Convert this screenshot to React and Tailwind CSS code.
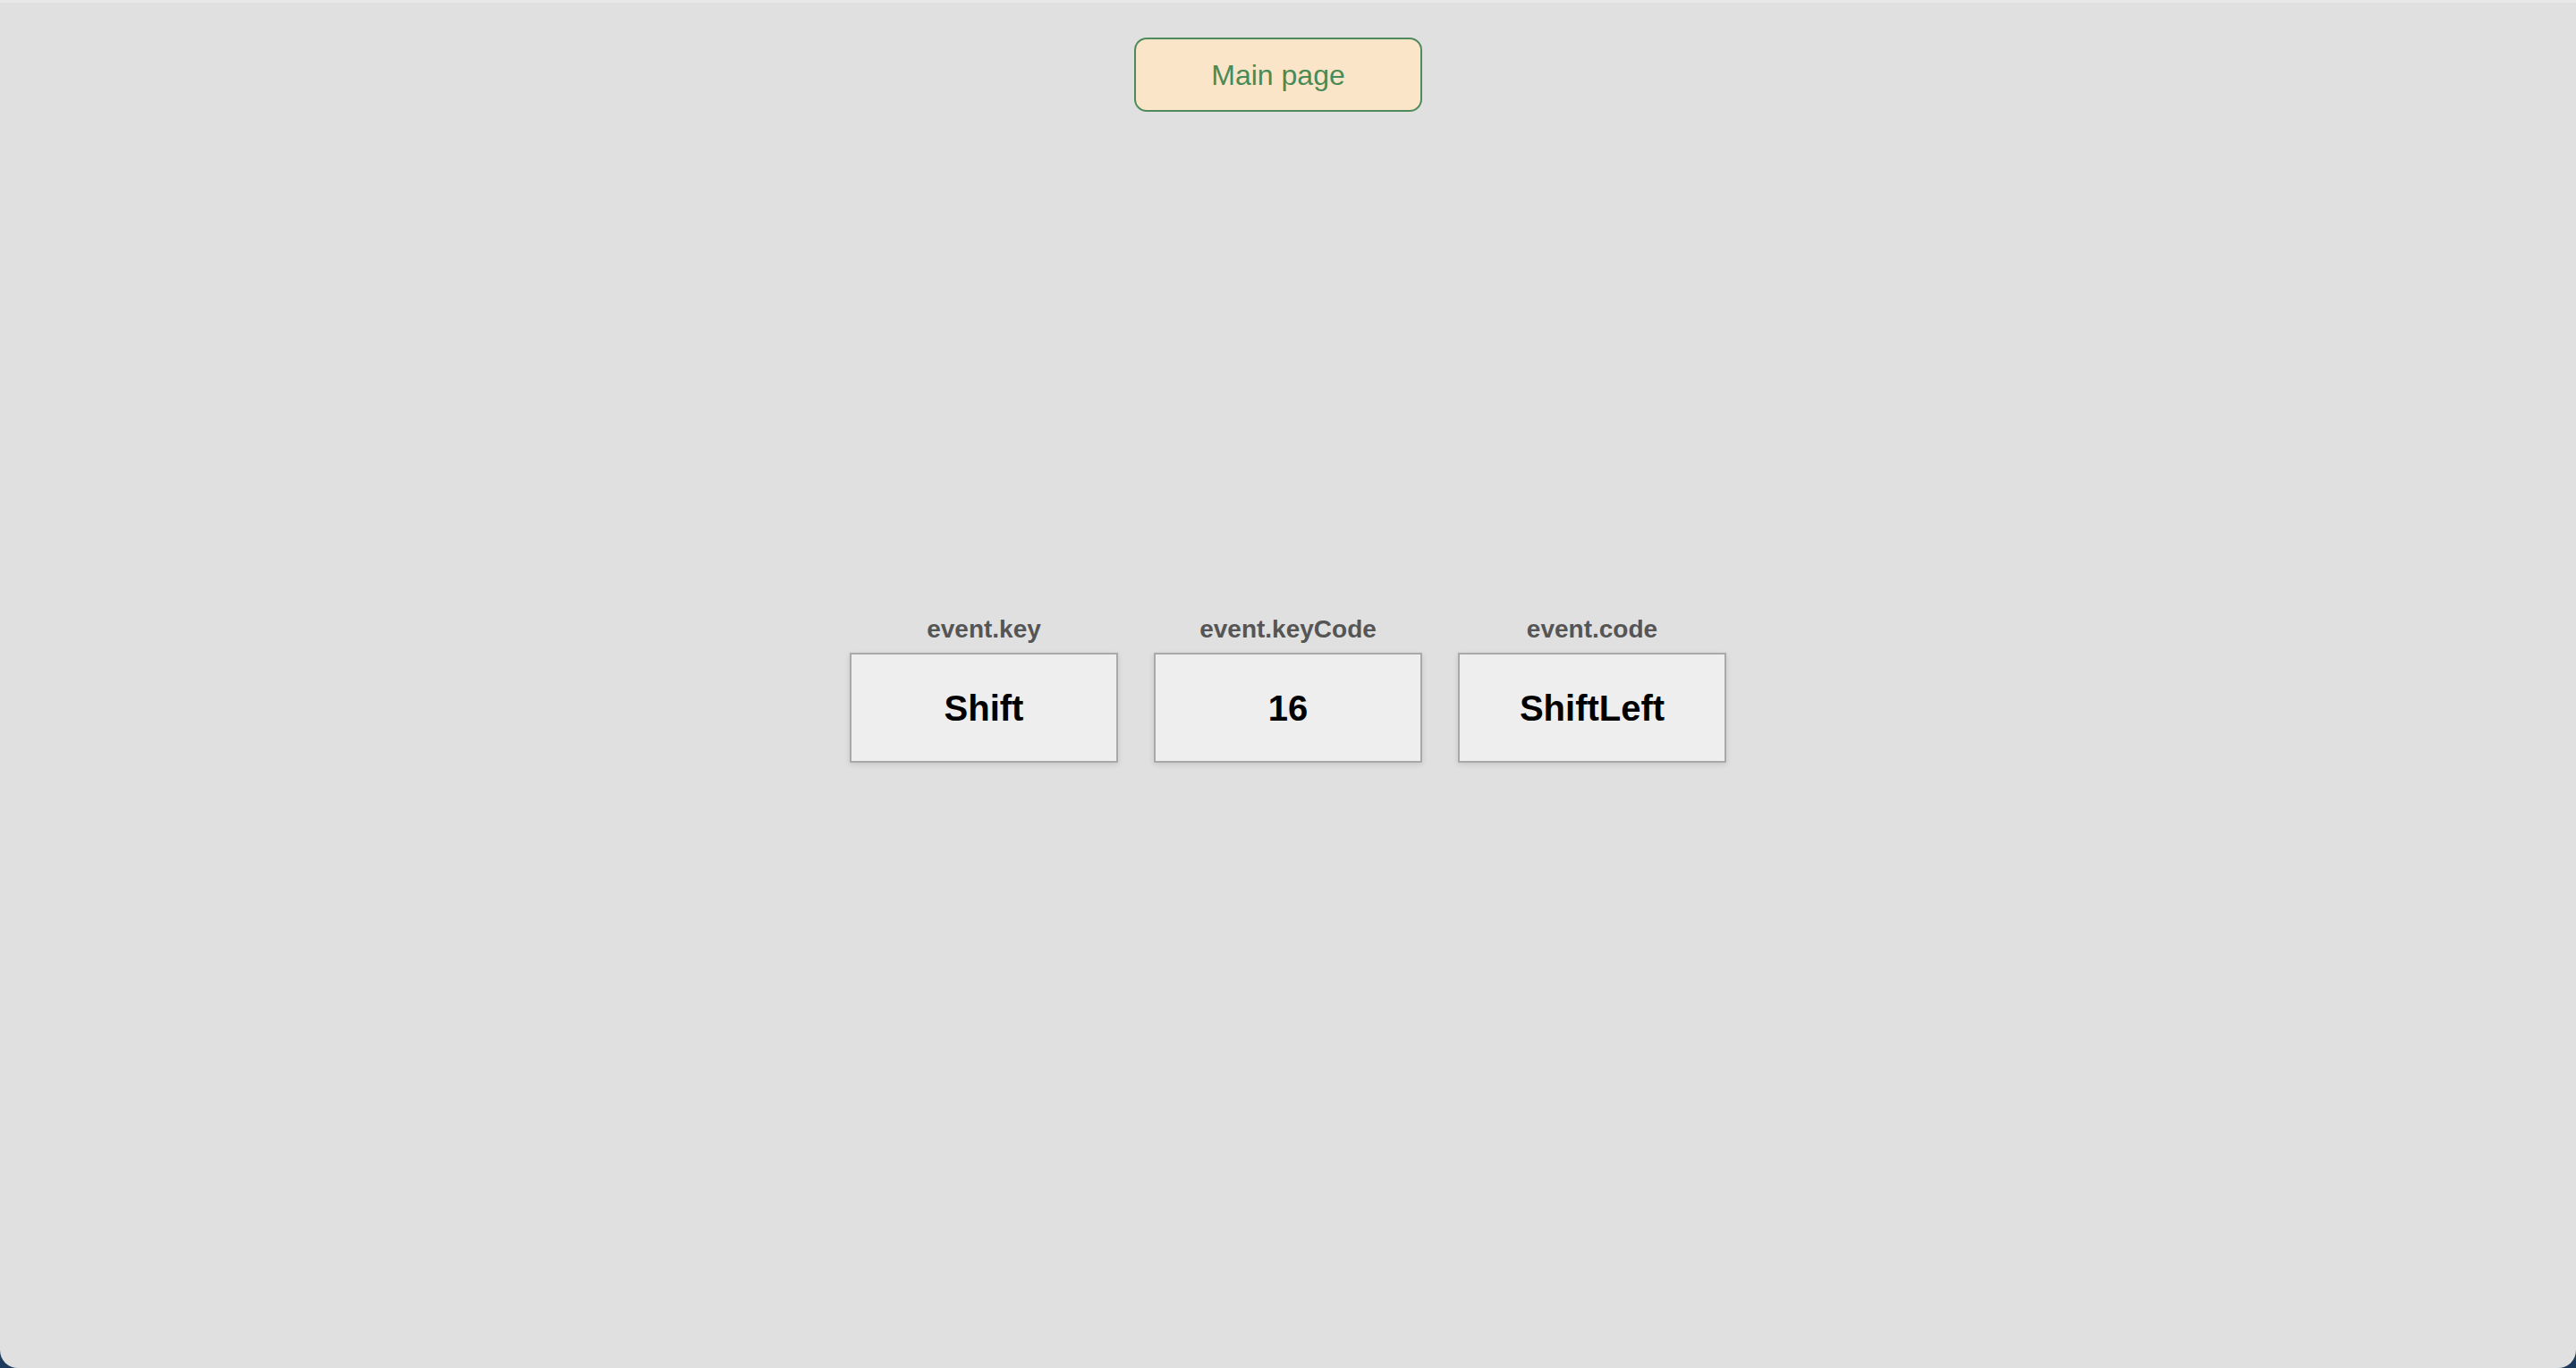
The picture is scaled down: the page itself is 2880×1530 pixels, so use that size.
const fields = [
  { label: "event.key", value: "Shift" },
  { label: "event.keyCode", value: "16" },
  { label: "event.code", value: "ShiftLeft" },
];

const KeyBox = ({ label, value }) => (
  <div className="flex flex-col items-center">
    <div className="mb-[10px] text-[28px] font-bold leading-[32px] text-[#555555]">{label}</div>
    <div className="flex h-[123px] w-[300px] items-center justify-center border-2 border-[#a9a9a9] bg-[#eeeeee] shadow-[0_2px_6px_rgba(0,0,0,0.12)]">
      <span className="text-[40px] font-bold leading-none text-black">{value}</span>
    </div>
  </div>
);

const App = () => {
  return (
    <div className="h-[1530px] w-full bg-[#1d3a5c]">
      <div
        className="flex h-full w-full flex-col rounded-b-[20px] border-t-[3px] border-[#e8e8e8] bg-[#e0e0e0]"
        style={{ fontFamily: '"Liberation Sans", Arial, sans-serif' }}
      >
        <div className="flex justify-center pr-[22px] pt-[39px]">
          <button className="h-[83px] w-[322px] rounded-[14px] border-2 border-[#4f8a5c] bg-[#fbe5c8] text-[32px] text-[#4a8a55]">
            Main page
          </button>
        </div>
        <div className="mt-[563px] flex justify-center gap-[40px]">
          {fields.map((f) => (
            <KeyBox key={f.label} label={f.label} value={f.value} />
          ))}
        </div>
      </div>
    </div>
  );
};

export default App;
